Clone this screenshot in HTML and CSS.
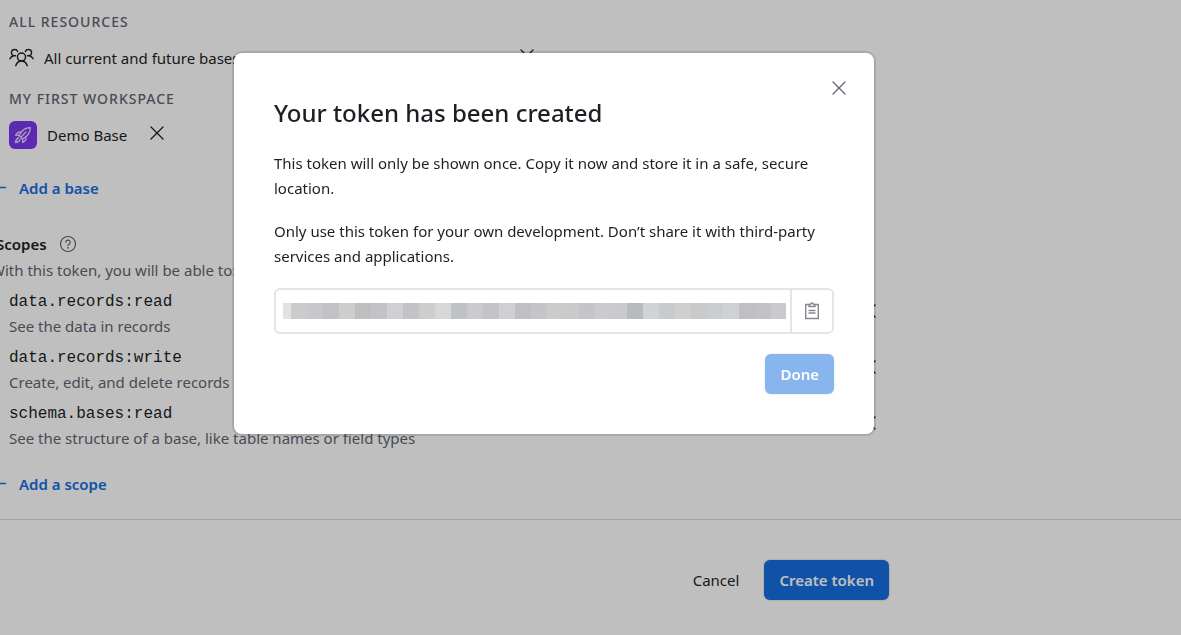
FILE: index.html
```html
<!DOCTYPE html>
<html lang="en">

<head>
    <meta charset="UTF-8">
    <meta name="viewport" content="width=device-width, initial-scale=1.0">
    <title>Create token</title>
    <link rel="stylesheet" href="styles.css">
</head>

<body>
    <svg class="sprite" aria-hidden="true">
        <symbol id="icon-x" viewBox="0 0 16 16">
            <path d="M2 2l12 12M14 2L2 14" />
        </symbol>
        <symbol id="icon-plus" viewBox="0 0 16 16">
            <path d="M1 7.500h13.500M8 1v13" />
        </symbol>
    </svg>

    <main class="page">
        <section class="resources">
            <h3 class="group-title">All resources</h3>
            <div class="resource">
                <svg class="icon-people" viewBox="0 0 26 20" aria-hidden="true">
                    <circle cx="13" cy="9" r="4.200" />
                    <path d="M7 18c1.200-3 3.200-4.800 6-4.800s4.800 1.800 6 4.800" />
                    <path d="M9 3.200C8.500 1.800 7.300 1.200 6 1.200 4 1.200 2.500 2.700 2.500 4.500c0 1.500.8 2.700 2.300 3.200h2M4.800 7.700C3 8.200 1.800 9.200 1 10.800" />
                    <path d="M17 3.200c.5-1.400 1.700-2 3-2 2 0 3.500 1.500 3.500 3.300 0 1.500-.8 2.700-2.300 3.200h-2M21.200 7.700c1.800.5 3 1.500 3.800 3.100" />
                </svg>
                <span class="resource-name">All current and future bases in all current and future workspaces</span>
                <button class="remove" aria-label="Remove all resources"><svg><use href="#icon-x" /></svg></button>
            </div>
            <h3 class="group-title">My First Workspace</h3>
            <div class="resource">
                <span class="base-icon">
                    <svg viewBox="0 0 20 20" aria-hidden="true">
                        <path d="M6 10.500C8 6.500 11 2.800 17.300 2.700 17.200 9 13.500 12 9.500 14z" />
                        <path d="M8 7.200H5.200L2.500 10.200l3.500.3M12.800 12v3L9.800 17.500 9.500 14M13 7l-5.200 5.200" />
                        <path d="M5.500 13c-2 .5-2.700 2-3 4.500 2.500-.3 4-1 4.500-3" />
                    </svg>
                </span>
                <span class="resource-name">Demo Base</span>
                <button class="remove" aria-label="Remove Demo Base"><svg><use href="#icon-x" /></svg></button>
            </div>
        </section>
        <button class="add"><svg><use href="#icon-plus" /></svg>Add a base</button>

        <section class="scopes">
            <h2 class="scopes-title">Scopes
                <svg class="icon-help" viewBox="0 0 18 18" aria-hidden="true">
                    <circle cx="9" cy="9" r="7.500" />
                    <path d="M6.800 7.200a2.200 2.200 0 1 1 3.200 2c-.7.400-1 .7-1 1.400" />
                    <circle class="dot" cx="9" cy="12.800" r=".9" />
                </svg>
            </h2>
            <p class="hint">With this token, you will be able to:</p>
            <ul class="scope-list">
                <li>
                    <div>
                        <code>data.records:read</code>
                        <p>See the data in records</p>
                    </div>
                    <button class="remove" aria-label="Remove data.records:read"><svg><use href="#icon-x" /></svg></button>
                </li>
                <li>
                    <div>
                        <code>data.records:write</code>
                        <p>Create, edit, and delete records</p>
                    </div>
                    <button class="remove" aria-label="Remove data.records:write"><svg><use href="#icon-x" /></svg></button>
                </li>
                <li>
                    <div>
                        <code>schema.bases:read</code>
                        <p>See the structure of a base, like table names or field types</p>
                    </div>
                    <button class="remove" aria-label="Remove schema.bases:read"><svg><use href="#icon-x" /></svg></button>
                </li>
            </ul>
        </section>
        <button class="add"><svg><use href="#icon-plus" /></svg>Add a scope</button>
    </main>

    <footer class="footer">
        <div class="footer-actions">
            <button class="btn-text">Cancel</button>
            <button class="btn-primary">Create token</button>
        </div>
    </footer>

    <div class="overlay">
        <div class="modal" role="dialog" aria-modal="true" aria-labelledby="modalTitle">
            <button class="close" aria-label="Close"><svg><use href="#icon-x" /></svg></button>
            <h1 id="modalTitle">Your token has been created</h1>
            <p>This token will only be shown once. Copy it now and store it in a safe, secure location.</p>
            <p>Only use this token for your own development. Don’t share it with third-party services and applications.</p>
            <div class="token-box">
                <input type="text" class="token" aria-label="Token" readonly>
                <button class="copy" aria-label="Copy token">
                    <svg viewBox="0 0 16 18" aria-hidden="true">
                        <path d="M5 2.500H1.700v14h12.600v-14H11" />
                        <path d="M5 4.500V2.500h1.500a1.500 1.500 0 0 1 3 0H11v2zM5 8.500h6M5 11h6" />
                    </svg>
                </button>
            </div>
            <div class="modal-actions">
                <button class="btn-primary" disabled>Done</button>
            </div>
        </div>
    </div>
</body>

</html>
```
FILE: styles.css
```css
* {
    box-sizing: border-box;
}

body {
    margin: 0;
    font-family: 'Noto Sans', 'Open Sans', sans-serif;
    font-size: 15px;
    line-height: 24px;
    color: #1d1f25;
    background: white;
    overflow: hidden;
}

h1,
h2,
h3,
p,
ul {
    margin: 0;
    padding: 0;
}

button {
    font: inherit;
    color: inherit;
    background: none;
    border: none;
    padding: 0;
    cursor: pointer;
}

svg {
    display: block;
    fill: none;
    stroke: currentColor;
    stroke-width: 1.5;
    stroke-linecap: round;
    stroke-linejoin: round;
}

.sprite {
    display: none;
}

.page {
    max-width: 898px;
    margin-left: -9px;
    padding-top: 10px;
}

/* Resources */
.resources {
    padding-left: 18px;
}

.group-title {
    font-size: 14px;
    font-weight: 500;
    letter-spacing: 1px;
    text-transform: uppercase;
    color: #616670;
}

.resource {
    display: flex;
    align-items: center;
    gap: 10px;
    height: 28px;
    margin: 10px 0 15px;
}

.icon-people {
    width: 25px;
    height: 20px;
}

.base-icon {
    display: flex;
    align-items: center;
    justify-content: center;
    width: 28px;
    height: 28px;
    border-radius: 6px;
    background: #7c37ef;
    color: #e6d9fc;
}

.base-icon svg {
    width: 20px;
    height: 20px;
    stroke-width: 1.3;
}

.remove {
    display: flex;
    align-items: center;
    justify-content: center;
    align-self: flex-start;
    width: 40px;
    height: 24px;
}

.remove svg,
.close svg {
    width: 16px;
    height: 16px;
    stroke-width: 1.3;
}

.add {
    display: flex;
    align-items: center;
    gap: 12px;
    height: 24px;
    font-weight: 600;
    color: #166ee1;
}

.add svg {
    width: 16px;
    height: 16px;
}

.resources + .add {
    margin-top: 27px;
}

/* Scopes */
.scopes {
    margin: 32px 0 18px;
}

.scopes-title {
    display: flex;
    align-items: center;
    gap: 12px;
    padding-left: 5px;
    font-size: 15px;
    font-weight: 600;
}

.icon-help {
    width: 18px;
    height: 18px;
    color: #616670;
    stroke-width: 1.2;
}

.icon-help .dot {
    fill: currentColor;
    stroke: none;
}

.hint {
    margin-top: 2px;
    color: #616670;
}

.scope-list {
    list-style: none;
    padding: 4px 0 0 18px;
}

.scope-list li {
    display: flex;
    justify-content: space-between;
    height: 56px;
    padding-top: 4px;
    color: #616670;
}

.scope-list code {
    display: block;
    font-family: 'Liberation Mono', monospace;
    font-size: 16px;
    color: #1d1f25;
}

.scope-list .remove {
    height: 42px;
    color: #1d1f25;
}

/* Footer */
.footer {
    border-top: 1px solid #d9d9d9;
    margin-top: 23px;
    padding: 40px 0 35px;
}

.footer-actions {
    display: flex;
    justify-content: flex-end;
    gap: 25px;
    max-width: 889px;
}

.btn-primary {
    height: 40px;
    padding: 0 15px;
    border-radius: 6px;
    font-weight: 600;
    color: white;
    background: #166ee1;
    box-shadow: 0 0 2px rgba(0, 0, 0, 0.3);
}

.btn-primary:disabled {
    opacity: 0.5;
    cursor: default;
}

/* Modal */
.overlay {
    position: fixed;
    inset: 0;
    padding: 53px 20px 20px 234px;
    background: rgba(0, 0, 0, 0.25);
}

.modal {
    position: relative;
    max-width: 640px;
    padding: 40px;
    border-radius: 8px;
    background: white;
    box-shadow: 0 0 0 2px rgba(0, 0, 0, 0.12);
}

.modal h1 {
    font-size: 24px;
    font-weight: 500;
    line-height: 40px;
}

.modal p {
    margin-top: 18px;
    line-height: 25px;
}

.close {
    position: absolute;
    top: 27px;
    right: 27px;
    color: #616670;
}

.token-box {
    display: flex;
    height: 46px;
    margin: 19px 0 20px;
    border: 2px solid #e5e5e5;
    border-radius: 6px;
}

.token {
    flex: 1;
    min-width: 0;
    border: none;
    border-radius: 6px;
    font: inherit;
    background: linear-gradient(to right,
            #e2e2e2 8px, #cbcbcd 8px 24px, #c6c8ca 24px 40px, #c2c2c5 40px 56px,
            #cdcdcc 56px 72px, #bfbec1 72px 88px, #c2c3c5 88px 104px, #d0d0d2 104px 120px,
            #c1c3c5 120px 136px, #cdcdcc 136px 152px, #d5d7d9 152px 168px, #bfc1c3 168px 184px,
            #cbcbcd 184px 200px, #c2c4c6 200px 216px, #d0d0d2 216px 232px, #c0bfc1 232px 248px,
            #c3c5c7 248px 264px, #cbcbca 264px 280px, #cacacc 280px 296px, #c5c5c7 296px 312px,
            #cbcbcd 312px 328px, #c9cacb 328px 344px, #b9babc 344px 360px, #d1d3d5 360px 376px,
            #c9cacc 376px 392px, #cfcfcf 392px 408px, #c8cacc 408px 424px, #cccdcf 424px 440px,
            #d0d1d3 440px 456px, #c0bfc1 456px 472px, #c2c2c5 472px 488px, #cacacc 488px) 7px 13px / 503px 16px no-repeat;
}

.copy {
    display: flex;
    align-items: center;
    justify-content: center;
    width: 42px;
    border-left: 2px solid #e5e5e5;
    color: #85888e;
}

.copy svg {
    width: 16px;
    height: 18px;
    stroke-width: 1.4;
    stroke-linejoin: miter;
}

.modal-actions {
    display: flex;
    justify-content: flex-end;
}
```
